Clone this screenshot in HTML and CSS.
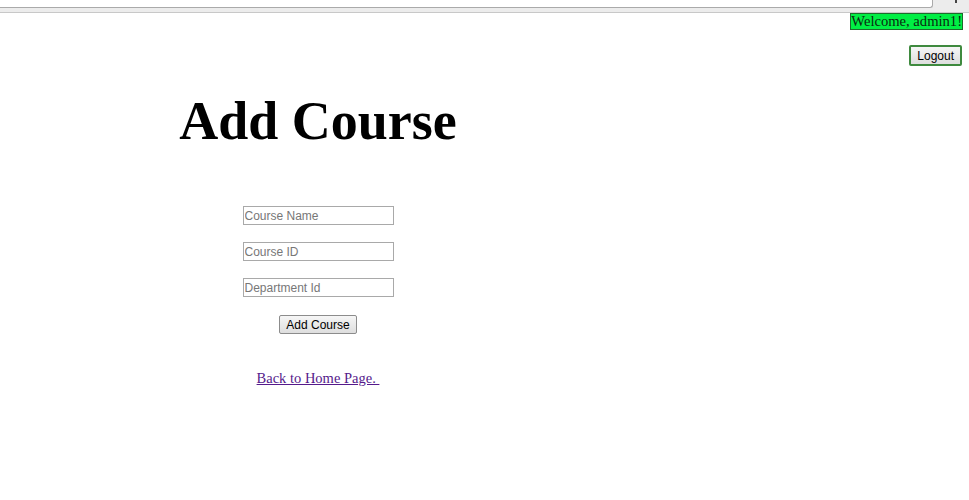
FILE: index.html
```html
<!DOCTYPE html>
<html>
<head>
<meta charset="utf-8">
<link rel="stylesheet" href="styles.css">
</head>
<body>
<div class="chrome">
  <div class="chrome-address"></div>
  <div class="chrome-side"><span class="chrome-glyph"></span></div>
</div>
<div class="userbar">
  <span class="welcome">Welcome, admin1!</span>
</div>
<div class="logoutbar">
  <button class="btn logout">Logout</button>
</div>
<div class="main">
  <h1 class="title">Add Course</h1>
  <form class="form">
    <input class="field" type="text" placeholder="Course Name">
    <input class="field" type="text" placeholder="Course ID">
    <input class="field" type="text" placeholder="Department Id">
    <button class="btn submit" type="button">Add Course</button>
  </form>
  <a class="back" href="#">Back to Home Page. </a>
</div>
</body>
</html>
```

FILE: styles.css
```css
html, body {
  margin: 0;
  padding: 0;
  background: #fff;
}
body {
  font-family: "Liberation Serif", "Times New Roman", serif;
  color: #000;
}
.chrome {
  display: flex;
  height: 13px;
  box-sizing: border-box;
  border-bottom: 1px solid #c8c8c8;
  background: #ececec;
}
.chrome-address {
  flex: 1;
  height: 7px;
  background: #fff;
  border-bottom: 1px solid #aaa;
  border-right: 1px solid #aaa;
  border-bottom-right-radius: 3px;
}
.chrome-side {
  width: 36px;
  position: relative;
}
.chrome-glyph {
  position: absolute;
  left: 22px;
  top: 0;
  width: 2px;
  height: 3px;
  background: #444;
}
.userbar {
  display: flex;
  justify-content: flex-end;
  padding-right: 6px;
}
.welcome {
  background: #00ee44;
  border: 1px solid #1d6b2c;
  font-size: 14.6px;
  line-height: 15px;
  padding: 0;
  color: #0b2a10;
}
.logoutbar {
  display: flex;
  justify-content: flex-end;
  padding-right: 7px;
  margin-top: 15px;
}
.btn {
  font-family: "Liberation Sans", Arial, sans-serif;
  font-size: 12px;
  color: #000;
  background: linear-gradient(#f6f6f6, #dedede);
  border-radius: 2px;
  cursor: pointer;
}
.logout {
  height: 21px;
  padding: 0 6px;
  border: 2px solid #3f8a3f;
}
.main {
  width: 636px;
  text-align: center;
}
.title {
  font-size: 54px;
  font-weight: bold;
  line-height: 60px;
  margin: 25px 0 0 0;
}
.form {
  display: flex;
  flex-direction: column;
  align-items: center;
  gap: 17px;
  margin-top: 55px;
}
.field {
  width: 151px;
  height: 19px;
  box-sizing: border-box;
  border: 1px solid #a9a9a9;
  font-family: "Liberation Sans", Arial, sans-serif;
  font-size: 12px;
  padding: 0 1px;
  margin: 0;
}
.field::placeholder {
  color: #777;
}
.submit {
  height: 19px;
  padding: 0 6px;
  border: 1px solid #8c8c8c;
  margin-top: 1px;
  box-sizing: border-box;
}
.back {
  display: inline-block;
  margin-top: 36px;
  font-size: 14.5px;
  color: #551a8b;
  white-space: pre;
}
```
